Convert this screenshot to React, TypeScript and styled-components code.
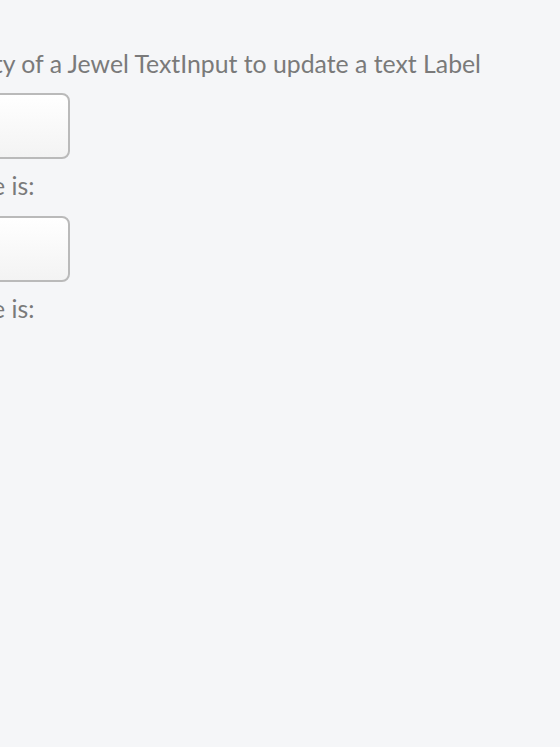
import React from 'react';
import styled, { createGlobalStyle } from 'styled-components';

const GlobalStyle = createGlobalStyle`
  html, body {
    margin: 0;
    padding: 0;
    background: #f5f6f8;
    overflow: hidden;
  }
  body {
    font-family: Lato, "Open Sans", sans-serif;
  }
`;

const Page = styled.div`
  width: 560px;
  height: 747px;
  overflow: hidden;
  background: #f5f6f8;
`;

const Column = styled.div`
  display: flex;
  flex-direction: column;
  align-items: flex-start;
  margin-left: -232px;
  padding-top: 50px;
  width: 900px;
`;

const Heading = styled.div`
  font-size: 24.8px;
  line-height: 28px;
  color: #7a7a7a;
  white-space: nowrap;
`;

const Input = styled.input<{ $gap?: number }>`
  box-sizing: border-box;
  width: 302px;
  height: 66px;
  margin-top: ${(p) => p.$gap ?? 15}px;
  border: 2px solid #bababa;
  border-radius: 8px;
  background: linear-gradient(#ffffff, #f3f3f3);
  outline: none;
`;

const Label = styled.div`
  font-size: 24.8px;
  line-height: 28px;
  color: #7a7a7a;
  margin-top: 13px;
  padding-left: 4px;
  white-space: nowrap;
`;

export default function App() {
  return (
    <Page>
      <GlobalStyle />
      <Column>
        <Heading>Use the value property of a Jewel TextInput to update a text Label</Heading>
        <Input />
        <Label>Jewel TextInput value is:</Label>
        <Input $gap={16} />
        <Label>Jewel TextInput value is:</Label>
      </Column>
    </Page>
  );
}
